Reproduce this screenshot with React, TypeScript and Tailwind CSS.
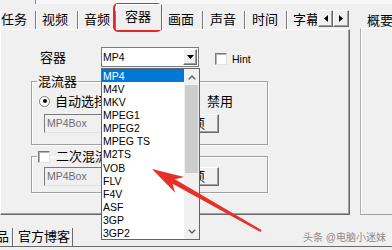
import React from "react";

const raised =
  "bg-[#f0f0f0] border border-t-white border-l-white border-r-[#696969] border-b-[#696969] shadow-[inset_-1px_-1px_0_#a0a0a0]";
const sunken =
  "border border-t-[#7a7a7a] border-l-[#7a7a7a] border-r-[#e3e3e3] border-b-[#e3e3e3]";

function Tab({ className, children }: { className: string; children: React.ReactNode }) {
  return (
    <div
      className={`h-[18px] shrink-0 overflow-hidden whitespace-nowrap border-l border-l-white border-r border-r-[#7a7a7a] text-[13px] leading-[18px] ${className}`}
    >
      {children}
    </div>
  );
}

function Check({ className = "" }: { className?: string }) {
  return <div className={`w-[12px] h-[12px] shrink-0 bg-white ${sunken} shadow-[inset_1px_1px_0_#b4b4b4] ${className}`} />;
}

function Radio({ checked }: { checked?: boolean }) {
  return (
    <div className="w-[11px] h-[11px] shrink-0 rounded-full bg-white border border-[#7a7a7a] flex items-center justify-center">
      {checked && <div className="w-[4px] h-[4px] rounded-full bg-black" />}
    </div>
  );
}

function InputRow() {
  return (
    <div className="flex items-end">
      <div
        className={`ml-[12px] w-[118px] h-[19px] bg-[#f0f0f0] ${sunken} pl-[2px] flex items-center text-[10.5px] text-[#6d6d6d]`}
      >
        MP4Box
      </div>
      <div className={`ml-[3px] w-[54px] h-[19px] ${raised} flex items-center justify-center text-[13px] leading-[15px]`}>
        选项
      </div>
    </div>
  );
}

export default function App() {
  const items = ["MP4", "M4V", "MKV", "MPEG1", "MPEG2", "MPEG TS", "M2TS", "VOB", "FLV", "F4V", "ASF", "3GP", "3GP2"];
  return (
    <div className="relative w-[392px] h-[250px] overflow-hidden bg-[#f0f0f0] text-black font-['Liberation_Sans','Noto_Sans_CJK_SC',sans-serif]">
      {/* top strip */}
      <div className="flex h-[4px]">
        <div className="w-[36px] border-r border-[#8a8a8a]" />
        <div className="flex-1 bg-[#f7f7f7]" />
      </div>

      <div className="flex">
        {/* main tab control */}
        <div className="w-[350px] shrink-0">
          <div className="relative z-10 flex items-end h-[25px]">
            <Tab className="w-[36px] pl-0">任务</Tab>
            <Tab className="w-[42px] pl-[5px]">视频</Tab>
            <Tab className="w-[38px] pl-[5px]">音频</Tab>
            <div className="w-[46px] h-[26px] -mb-px shrink-0 bg-[#f0f0f0] border-l border-t border-white border-r border-r-[#696969] pl-[8px] pt-[3px] text-[13px] leading-[18px]">
              容器
            </div>
            <Tab className="w-[41px] pl-[5px]">画面</Tab>
            <Tab className="w-[42px] pl-[6px]">声音</Tab>
            <Tab className="w-[42px] pl-[6px]">时间</Tab>
            <Tab className="w-[30px] pl-[5px] border-r-0">字幕</Tab>
            <div className="flex mb-[2px] ml-[1px]">
              <div className={`w-[15px] h-[17px] ${raised} flex items-center justify-center`}>
                <svg width="4" height="7" viewBox="0 0 4 7">
                  <polygon points="4,0 0,3.5 4,7" fill="#000" />
                </svg>
              </div>
              <div className={`w-[16px] h-[17px] ${raised} flex items-center justify-center`}>
                <svg width="4" height="7" viewBox="0 0 4 7">
                  <polygon points="0,0 4,3.5 0,7" fill="#000" />
                </svg>
              </div>
            </div>
          </div>

          <div className="h-[186px] border border-t-white border-l-white border-r-[#696969] border-b-[#696969] shadow-[inset_-1px_-1px_0_#a0a0a0]">
            {/* container row */}
            <div className="flex items-center h-[20px] mt-[17px]">
              <div className="ml-[39px] w-[61px] text-[13px] leading-[18px] pt-[2px]">容器</div>
              <div className="w-[98px] h-[20px] bg-white border border-[#7a7a7a] flex items-center">
                <span className="flex-1 pl-[1px] text-[10.5px] leading-[14px]">MP4</span>
                <div className={`w-[14px] h-[16px] mr-[1px] ${raised} flex items-center justify-center`}>
                  <svg width="7" height="4" viewBox="0 0 7 4">
                    <polygon points="0,0 7,0 3.5,4" fill="#000" />
                  </svg>
                </div>
              </div>
              <Check className="ml-[16px] mt-[4px]" />
              <span className="ml-[5px] mt-[3px] text-[10.5px] leading-[14px]">Hint</span>
            </div>

            {/* mixer group */}
            <fieldset className="ml-[30px] mt-[7px] w-[237px] border border-[#a0a0a0] shadow-[1px_1px_0_#ffffff,inset_1px_1px_0_#ffffff] pb-[11px]">
              <legend className="ml-[5px] px-[1px] text-[13px] leading-[15px]">混流器</legend>
              <div className="flex items-center h-[14px] mt-[5px] text-[13px] leading-[15px]">
                <div className="ml-[7px] w-[149px] flex items-center">
                  <Radio checked />
                  <span className="ml-[5px] whitespace-nowrap">自动选择</span>
                </div>
                <Radio />
                <span className="ml-[8px]">禁用</span>
              </div>
              <div className="mt-[6px]">
                <InputRow />
              </div>
            </fieldset>

            {/* second mux group */}
            <fieldset className="ml-[30px] mt-[4px] w-[237px] border border-[#a0a0a0] shadow-[1px_1px_0_#ffffff,inset_1px_1px_0_#ffffff] pb-[6px]">
              <legend className="ml-[5px] px-[1px]">
                <div className="flex items-center h-[15px] text-[13px] leading-[15px]">
                  <Check className="w-[11px] h-[11px]" />
                  <span className="ml-[6px] whitespace-nowrap">二次混流</span>
                </div>
              </legend>
              <div className="mt-[3px]">
                <InputRow />
              </div>
            </fieldset>
          </div>
        </div>

        {/* right panel */}
        <div className="ml-[10px] w-[40px] shrink-0">
          <div className="h-[24px] pl-[7px] pt-[9px] text-[13px] leading-[15px] whitespace-nowrap">概要</div>
          <div className="h-[187px] border-l border-t border-b border-l-[#b0b0b0] border-t-white border-b-[#a0a0a0] shadow-[inset_1px_0_0_#ffffff]" />
        </div>
      </div>

      {/* bottom tabs */}
      <div className="h-[13px]" />
      <div className="flex h-[18px]">
        <div className="w-[13px] h-[18px] overflow-hidden flex justify-end pr-[3px] border-r border-r-[#696969] text-[13px] leading-[18px] whitespace-nowrap">
          品
        </div>
        <div className="w-[60px] h-[18px] pl-[4px] border-l border-l-white border-r border-r-[#696969] text-[13px] leading-[18px] whitespace-nowrap">
          官方博客
        </div>
      </div>
      <div className="h-px bg-[#6a6a6a]" />

      {/* dropdown list (open combo) */}
      <div className="absolute left-[101px] top-[68px] w-[99px] h-[172px] bg-white border border-[#646464] flex">
        <div className="w-[82px]">
          {items.map((it, i) => (
            <div
              key={it}
              className={`h-[13.15px] pl-[1px] flex items-center text-[10.5px] leading-[12px] whitespace-nowrap ${
                i === 0 ? "bg-[#0078d7] text-white" : "text-black"
              }`}
            >
              {it}
            </div>
          ))}
        </div>
        <div className="w-[15px] bg-[#f0f0f0] flex flex-col">
          <div className="h-[16px] flex items-center justify-center">
            <svg width="8" height="5" viewBox="0 0 8 5">
              <polyline points="0.8,4.2 4,1 7.2,4.2" fill="none" stroke="#606060" strokeWidth="1.4" />
            </svg>
          </div>
          <div className="mx-[1px] h-[88px] bg-[#cdcdcd]" />
          <div className="flex-1" />
          <div className="h-[16px] flex items-center justify-center">
            <svg width="8" height="5" viewBox="0 0 8 5">
              <polyline points="0.8,0.8 4,4 7.2,0.8" fill="none" stroke="#606060" strokeWidth="1.4" />
            </svg>
          </div>
        </div>
      </div>

      {/* red highlight box */}
      <div className="absolute left-[113px] top-[3px] w-[49px] h-[29px] border-[2.5px] border-[#e8262a] rounded-[5px]" />

      {/* red arrow */}
      <svg className="absolute left-0 top-0 pointer-events-none" width="392" height="250" viewBox="0 0 392 250">
        <polygon
          points="152,169 184.2,177.1 174.9,179.3 261.5,230.1 260.5,231.9 172.5,183.7 175.2,192.7"
          fill="#e8302a"
        />
      </svg>

      {/* watermark */}
      <div className="absolute left-[303px] top-[231px] text-[10px] leading-[14px] text-[#8c8c8c] whitespace-nowrap">
        头条 @电脑小迷妹
      </div>
    </div>
  );
}
